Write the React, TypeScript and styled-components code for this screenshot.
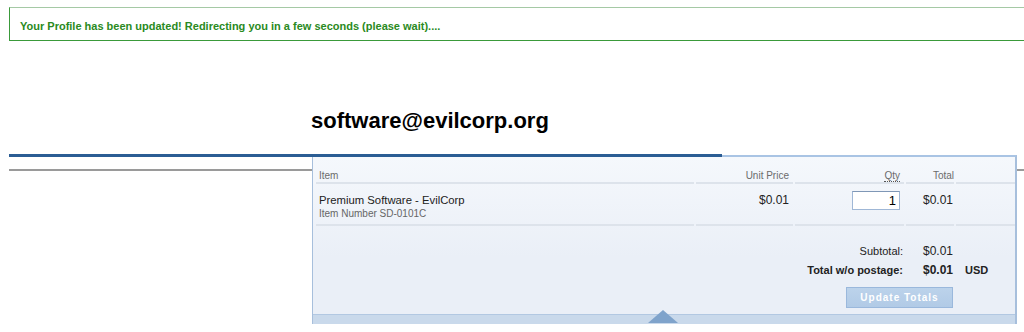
import React, { FC } from "react";
import styled, { createGlobalStyle } from "styled-components";

const GlobalStyle = createGlobalStyle`
  html {
    overflow: hidden;
  }
  body {
    margin: 0;
    padding: 7px 0 0 9px;
    background: #fff;
    font-family: "Liberation Sans", Arial, sans-serif;
  }
`;

const Notice = styled.div`
  box-sizing: border-box;
  width: calc(100% + 40px);
  height: 34px;
  border: 1px solid #3a9a3a;
  border-top-color: #a5c9a5;
  padding: 3px 0 0 10px;
  display: flex;
  align-items: center;
  color: #2a8a22;
  font-size: 11px;
  font-weight: bold;
`;

const Heading = styled.h1`
  margin: 0;
  padding: 67px 0 0 302px;
  font-size: 22px;
  font-weight: bold;
  color: #000;
  line-height: 26px;
`;

const Stage = styled.div`
  position: relative;
  margin-top: 20px;
  height: 180px;
`;

const Bar = styled.div`
  position: relative;
  z-index: 2;
  width: 713px;
  height: 3px;
  background: #2b5d94;
`;

const Rule = styled.div`
  margin-top: 12px;
  width: calc(100% + 40px);
  height: 2px;
  background: #9a9a9a;
`;

const Cart = styled.div`
  position: absolute;
  z-index: 1;
  left: 303px;
  top: 1px;
  width: 705px;
  box-sizing: border-box;
  border: 1px solid #a7bfdc;
  border-top: 2px solid #a9c4e4;
  border-right-width: 2px;
  border-bottom: none;
  background: linear-gradient(#f5f8fc, #eaeff7 60%);
`;

const Grid = styled.div`
  display: grid;
  grid-template-columns: 378px 97px 109px 48px 59px;
  column-gap: 2px;
  padding: 0 3px;
`;

interface CellProps {
  $align?: "left" | "right";
  $price?: boolean;
  $tight?: boolean;
}

const HeadCell = styled.div<CellProps>`
  padding: 13px ${(p) => (p.$tight ? "0" : "4px")} 0 3px;
  border-bottom: 2px solid #dde3eb;
  font-size: 10px;
  color: #6b6b6b;
  text-align: ${(p) => p.$align || "left"};
  line-height: 12px;
`;

const Abbr = styled.abbr`
  text-decoration: none;
  border-bottom: 1px dotted #555;
`;

const BodyCell = styled.div<CellProps>`
  padding: 9px ${(p) => (p.$tight ? "1px" : "4px")} 2px 3px;
  border-bottom: 2px solid #dde3eb;
  font-size: ${(p) => (p.$price ? "12px" : "11.3px")};
  color: #222;
  text-align: ${(p) => p.$align || "left"};
  line-height: 14px;
`;

const ItemName = styled.div`
  color: #222;
`;

const ItemNumber = styled.div`
  font-size: 10px;
  color: #666;
  line-height: 14px;
  margin-bottom: 1px;
`;

const QtyInput = styled.input`
  box-sizing: border-box;
  width: 48px;
  height: 19px;
  margin-top: -2px;
  border: 1px solid #9fb7d6;
  border-top-color: #7f97b6;
  padding: 0 3px;
  text-align: right;
  font-family: "Liberation Sans", Arial, sans-serif;
  font-size: 13px;
  color: #000;
  background: #fff;
`;

const Totals = styled.div`
  display: grid;
  grid-template-columns: 588px 48px 59px;
  column-gap: 2px;
  row-gap: 4px;
  padding: 18px 3px 0;
  font-size: 11px;
  line-height: 15px;
  color: #222;
`;

interface TotalProps {
  $bold?: boolean;
}

const Label = styled.div<TotalProps>`
  text-align: right;
  padding-right: 1px;
  font-weight: ${(p) => (p.$bold ? "bold" : "normal")};
`;

const Amount = styled.div<TotalProps>`
  text-align: right;
  padding-right: 1px;
  font-size: 12px;
  font-weight: ${(p) => (p.$bold ? "bold" : "normal")};
`;

const Currency = styled.div`
  padding-left: 9px;
  font-weight: bold;
  font-size: 11px;
`;

const ButtonRow = styled.div`
  display: flex;
  justify-content: flex-end;
  padding: 9px 62px 6px 0;
`;

const UpdateButton = styled.button`
  width: 107px;
  height: 21px;
  border: 1px solid #9ab8dc;
  background: linear-gradient(#bcd3eb, #b1cae6);
  color: #fff;
  font-family: "Liberation Sans", Arial, sans-serif;
  font-size: 10px;
  font-weight: bold;
  letter-spacing: 1px;
  padding: 0;
`;

const Footer = styled.div`
  position: relative;
  height: 9px;
  border-top: 1px solid #b2c8e2;
  background: #c9d9eb;
`;

const Arrow = styled.svg`
  position: absolute;
  left: 335px;
  top: -5px;
`;

const App: FC = () => {
  return (
    <>
      <GlobalStyle />
      <Notice>
        Your Profile has been updated! Redirecting you in a few seconds (please
        wait)....
      </Notice>
      <Heading>software@evilcorp.org</Heading>
      <Stage>
        <Bar />
        <Rule />
        <Cart>
          <Grid>
            <HeadCell>Item</HeadCell>
            <HeadCell $align="right">Unit Price</HeadCell>
            <HeadCell $align="right">
              <Abbr title="Quantity">Qty</Abbr>
            </HeadCell>
            <HeadCell $align="right" $tight>
              Total
            </HeadCell>
            <HeadCell />
            <BodyCell>
              <ItemName>Premium Software - EvilCorp</ItemName>
              <ItemNumber>Item Number SD-0101C</ItemNumber>
            </BodyCell>
            <BodyCell $align="right" $price>
              $0.01
            </BodyCell>
            <BodyCell $align="right">
              <QtyInput defaultValue="1" />
            </BodyCell>
            <BodyCell $align="right" $price $tight>
              $0.01
            </BodyCell>
            <BodyCell />
          </Grid>
          <Totals>
            <Label>Subtotal:</Label>
            <Amount>$0.01</Amount>
            <div />
            <Label $bold>Total w/o postage:</Label>
            <Amount $bold>$0.01</Amount>
            <Currency>USD</Currency>
          </Totals>
          <ButtonRow>
            <UpdateButton type="button">Update Totals</UpdateButton>
          </ButtonRow>
          <Footer>
            <Arrow width="30" height="13" viewBox="0 0 30 13">
              <polygon points="0,13 15,0 30,13" fill="#7fa3cb" />
            </Arrow>
          </Footer>
        </Cart>
      </Stage>
    </>
  );
};

export default App;
